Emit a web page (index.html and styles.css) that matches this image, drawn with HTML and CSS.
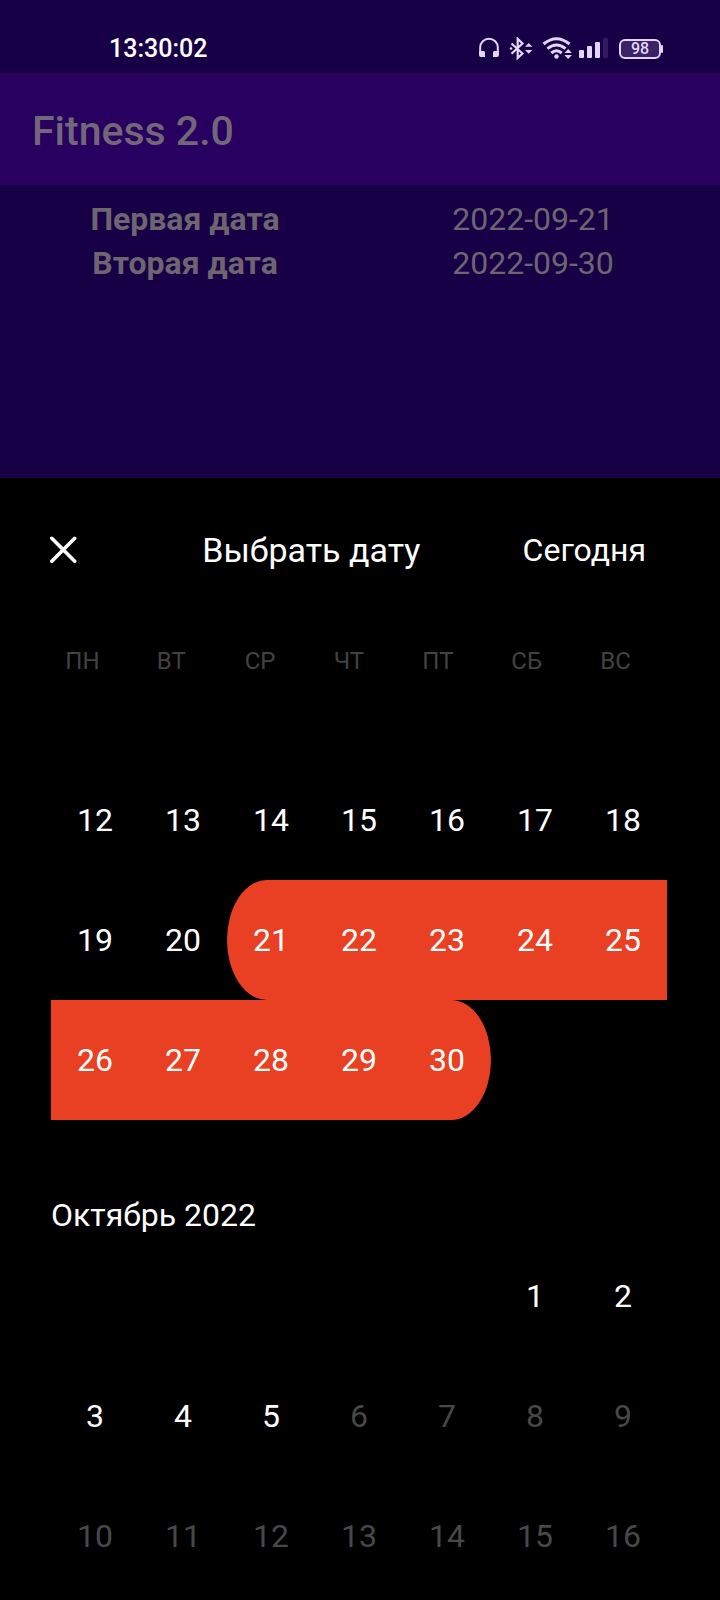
FILE: index.html
```html
<!DOCTYPE html>
<html lang="ru">
<head>
<meta charset="utf-8">
<meta name="viewport" content="width=device-width, initial-scale=1">
<title>Fitness 2.0</title>
<link rel="stylesheet" href="styles.css">
</head>
<body>
<div class="screen">
  <div class="status">
    <time class="clock">13:30:02</time>
    <div class="status-icons">
      <svg width="24" height="24" viewBox="0 0 24 24" aria-label="Наушники"><path d="M1.200 16V10.500a8.700 8.700 0 0 1 17.600 0V16" fill="none" stroke="#e2d6f5" stroke-width="2"/><path d="M0 14h4.500q1.500 0 1.500 1.500V20H2q-2 0-2-2zM20 14h-4.500q-1.500 0-1.500 1.500V20H18q2 0 2-2z" fill="#e2d6f5"/></svg>
      <svg width="27" height="24" viewBox="0 0 27 24" aria-label="Bluetooth"><path d="M2.500 6.500L13.500 16.500 8.700 21V1.800L13.500 6.500 2.500 16.800" fill="none" stroke="#e2d6f5" stroke-width="2.200"/><path d="M16 9.800L19.700 6l3.700 3.800zM16 13h7.400l-3.700 3.800z" fill="#e2d6f5"/><circle cx="2" cy="11.500" r="1.300" fill="#e2d6f5"/></svg>
      <svg width="30" height="24" viewBox="0 0 30 24" aria-label="Wi-Fi"><g fill="none" stroke="#e2d6f5" stroke-width="3"><path d="M1.500 7Q14.500-3.500 27.500 7"/><path d="M5.500 11.700Q14.500 4.200 23.500 11.700"/><path d="M9.300 16Q14.500 11.500 19.700 16"/></g><circle cx="14.500" cy="19.500" r="2.200" fill="#e2d6f5"/><path d="M22.500 16l3.700-4 3.700 4zM22.500 18h7.400l-3.700 4z" fill="#e2d6f5"/></svg>
      <svg width="34" height="24" viewBox="0 0 34 24" aria-label="Сигнал"><g fill="#e2d6f5"><rect x="1" y="13" width="5" height="8" rx="1"/><rect x="9" y="9" width="5" height="12" rx="1"/><rect x="17" y="5" width="5" height="16" rx="1"/></g><rect x="25" y="1" width="5" height="20" rx="1" fill="#32185c"/></svg>
      <div class="battery"><span>98</span></div>
    </div>
  </div>
  <header class="appbar"><h1>Fitness 2.0</h1></header>
  <main class="content">
    <dl class="dates">
      <dt>Первая дата</dt><dd>2022-09-21</dd>
      <dt>Вторая дата</dt><dd>2022-09-30</dd>
    </dl>
  </main>
  <section class="sheet" aria-labelledby="sheet-title">
    <div class="sheet-head">
      <button class="close" aria-label="Закрыть"><svg width="27" height="28" viewBox="0 0 27 28"><path d="M1.800 2.300L24.700 25.200M24.700 2.300L1.800 25.200" stroke="#fff" stroke-width="3.600" stroke-linecap="round"/></svg></button>
      <h2 id="sheet-title">Выбрать дату</h2>
      <button class="today">Сегодня</button>
    </div>
    <div class="weekdays"><span>ПН</span><span>ВТ</span><span>СР</span><span>ЧТ</span><span>ПТ</span><span>СБ</span><span>ВС</span></div>
    <div class="month">
      <button>12</button><button>13</button><button>14</button><button>15</button><button>16</button><button>17</button><button>18</button>
      <button>19</button><button>20</button><button class="picked first">21</button><button class="picked">22</button><button class="picked">23</button><button class="picked">24</button><button class="picked">25</button>
      <button class="picked">26</button><button class="picked">27</button><button class="picked">28</button><button class="picked">29</button><button class="picked last">30</button>
    </div>
    <h3 class="month-name">Октябрь 2022</h3>
    <div class="month">
      <button class="saturday">1</button><button>2</button>
      <button>3</button><button>4</button><button>5</button><button disabled>6</button><button disabled>7</button><button disabled>8</button><button disabled>9</button>
      <button disabled>10</button><button disabled>11</button><button disabled>12</button><button disabled>13</button><button disabled>14</button><button disabled>15</button><button disabled>16</button>
    </div>
  </section>
</div>
</body>
</html>
```
FILE: styles.css
```css
* { box-sizing: border-box; }
body {
  margin: 0;
  background: #000;
  color: #fff;
  font-family: Roboto, "Noto Sans", sans-serif;
  font-size: 32px;
}
h1, h2, h3, dl, dd { margin: 0; font-weight: 400; }
button {
  padding: 0;
  border: 0;
  background: none;
  color: inherit;
  font: inherit;
}
.screen {
  display: flex;
  flex-direction: column;
  min-height: 100vh;
}
.status {
  display: flex;
  align-items: center;
  justify-content: space-between;
  padding: 24px 56px 0 109px;
  height: 73px;
  background: #180046;
}
.clock {
  font-size: 25px;
  font-weight: 500;
}
.status-icons {
  display: flex;
  align-items: center;
  gap: 6px;
}
.battery {
  position: relative;
  display: flex;
  align-items: center;
  justify-content: center;
  width: 42px;
  height: 20px;
  margin: 0 3px 0 1px;
  border: 2px solid #e2d6f5;
  border-radius: 6px;
  background: #3b2267;
  color: #e2d6f5;
  font-size: 16px;
  font-weight: 500;
}
.battery::after {
  content: "";
  position: absolute;
  right: -4px;
  top: 4px;
  width: 2px;
  height: 8px;
  border-radius: 1px;
  background: #e2d6f5;
}
.appbar {
  padding: 34px 32px 30px;
  background: #280060;
}
.appbar h1 {
  color: #726779;
  font-size: 41px;
  font-weight: 500;
  line-height: 48px;
}
.content {
  min-height: 293px;
  padding: 12px 13px 12px 11px;
  background: #180046;
}
.dates {
  display: grid;
  grid-template-columns: 1fr 1fr;
  color: #6d656f;
  line-height: 44px;
  text-align: center;
}
.dates dt { font-weight: 700; }
.sheet { flex: 1; }
.sheet-head {
  display: flex;
  align-items: center;
  justify-content: space-between;
  padding: 48px 74px 48px 50px;
  line-height: 48px;
}
.sheet-head h2 { font-size: 34px; }
.close {
  display: flex;
  align-items: center;
  width: 50px;
  height: 48px;
}
.weekdays {
  display: grid;
  grid-template-columns: repeat(7, 1fr);
  padding: 21px 60px 19px 38px;
  color: #424242;
  font-size: 24px;
  line-height: 36px;
  text-align: center;
}
.month {
  display: grid;
  grid-template-columns: repeat(7, 1fr);
  grid-auto-rows: 120px;
  margin: 0 53px 0 51px;
}
.weekdays + .month { padding-top: 62px; }
.month-name {
  padding: 74px 51px 0;
  font-size: 32px;
  line-height: 42px;
}
.month button:disabled { color: #484848; }
.saturday { grid-column: 6; }
.month .picked { background: #e94023; }
.month .first { border-radius: 40px 0 0 40px / 60px 0 0 60px; }
.month .last { border-radius: 0 40px 40px 0 / 0 60px 60px 0; }
```
